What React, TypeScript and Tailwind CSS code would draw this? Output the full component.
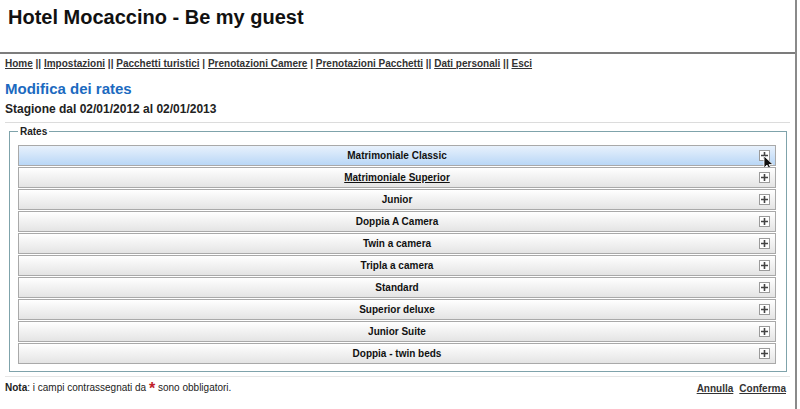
import React from 'react';

const navLinks = ['Home', 'Impostazioni', 'Pacchetti turistici', 'Prenotazioni Camere', 'Prenotazioni Pacchetti', 'Dati personali', 'Esci'];
const navSeps = [' || ', ' || ', ' | ', ' | ', ' || ', ' || '];

const rates = [
    'Matrimoniale Classic',
    'Matrimoniale Superior',
    'Junior',
    'Doppia A Camera',
    'Twin a camera',
    'Tripla a camera',
    'Standard',
    'Superior deluxe',
    'Junior Suite',
    'Doppia - twin beds',
];

function PlusIcon() {
    return (
        <span className="flex h-[11px] w-[11px] items-center justify-center border border-[#9a9a9a] bg-white">
            <svg width="7" height="7" viewBox="0 0 7 7">
                <path d="M3.5 0v7M0 3.5h7" stroke="#444" strokeWidth="1.6"/>
            </svg>
        </span>
    );
}

function RateRow({name, index}: {name: string; index: number}) {
    const active = index === 0;
    return (
        <div
            className={`relative flex h-[21px] items-center justify-center border border-[#a9a9a9] ${
                active ? 'bg-gradient-to-b from-[#e8f1fc] to-[#b9d7f6]' : 'bg-gradient-to-b from-white to-[#e4e4e4]'
            }`}>
            <span className={`text-[10px] font-bold text-[#111] ${index === 1 ? 'underline' : ''}`}>{name}</span>
            <span className="absolute right-[5px] top-[4px]">
                <PlusIcon/>
            </span>
            {active && (
                <svg className="absolute right-[1px] top-[9px]" width="11" height="16" viewBox="0 0 11 16">
                    <path d="M1 1v12l3-3 2.5 5 2-1-2.5-4.5h4z" fill="#111" stroke="#fff" strokeWidth="0.8"/>
                </svg>
            )}
        </div>
    );
}

export default function App() {
    return (
        <div className="h-[409px] w-[800px] overflow-hidden bg-white font-['Liberation_Sans',Arial,sans-serif] text-[#222]">
            <div className="h-full w-[797px] border-r-2 border-[#8a8a8a]">
                <h1 className="h-[52px] px-[8px] pt-[4px] text-[20px] font-bold leading-[26px] text-[#111]">
                    Hotel Mocaccino - Be my guest
                </h1>
                <div className="border-t-2 border-[#7c7c7c]"/>

                <div className="px-[5px] pt-[3px]">
                    <nav className="text-[10px] font-bold leading-[13px] text-[#333]">
                        {navLinks.map((l, i) => (
                            <React.Fragment key={l}>
                                <a className="underline">{l}</a>
                                {i < navSeps.length && <span className="whitespace-pre">{navSeps[i]}</span>}
                            </React.Fragment>
                        ))}
                    </nav>

                    <h2 className="mt-[10px] text-[15px] font-bold leading-[18px] text-[#1b6ac0]">Modifica dei rates</h2>
                    <h3 className="mt-[3px] text-[12px] font-bold leading-[16px] text-[#222]">Stagione dal 02/01/2012 al 02/01/2013</h3>
                    <div className="mt-[5px] border-t border-[#dcdcdc]"/>

                    <fieldset className="ml-[4px] mr-[3px] mt-[2px] border border-[#7fa3ab] pl-[8px] pr-[10px] pb-[7px] pt-0">
                        <legend className="px-[2px] text-[10px] font-bold leading-[13px] text-[#222]">Rates</legend>
                        <div className="mt-[7px] flex flex-col gap-[1px]">
                            {rates.map((r, i) => (
                                <RateRow key={r} name={r} index={i}/>
                            ))}
                        </div>
                    </fieldset>

                    <div className="mt-[4px] border-t border-[#e6e6e6]"/>
                    <div className="flex items-center justify-between pt-[3px] pr-[4px] text-[10px] leading-[16px]">
                        <p className="text-[#222]">
                            <b>Nota</b>: i campi contrassegnati da <span className="align-[-3px] text-[16px] font-bold text-[#c0202a]">*</span> sono obbligatori.
                        </p>
                        <div className="flex gap-[6px] font-bold text-[#333]">
                            <a className="underline">Annulla</a>
                            <a className="underline">Conferma</a>
                        </div>
                    </div>
                </div>
            </div>
        </div>
    );
}
